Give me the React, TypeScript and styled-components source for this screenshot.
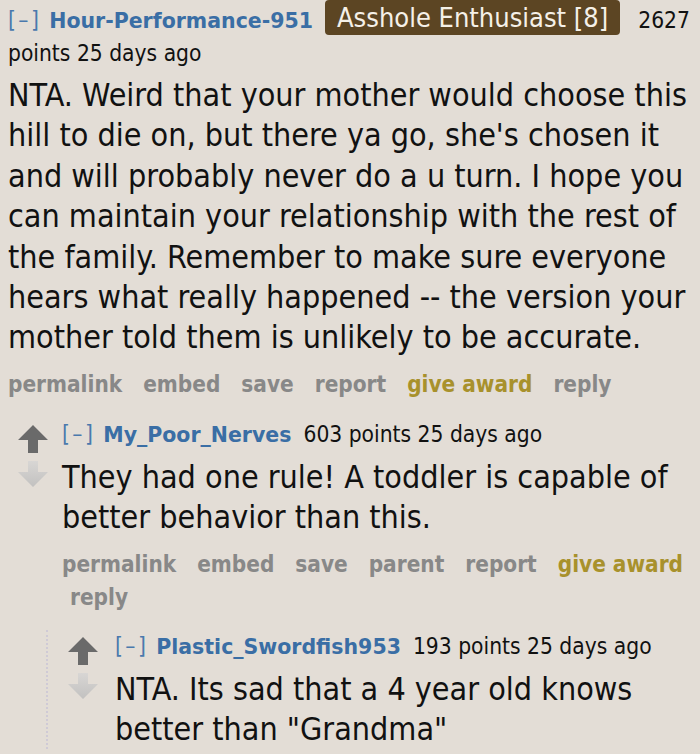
import React from "react";
import styled, { createGlobalStyle } from "styled-components";

const Global = createGlobalStyle`
  html, body { margin: 0; padding: 0; background: #e3ddd6; }
  body { font-family: "DejaVu Sans Condensed", "DejaVu Sans", Verdana, sans-serif; }
`;

const Page = styled.div`
  width: 700px;
  height: 754px;
  overflow: hidden;
  background: #e3ddd6;
  padding: 0 8px;
  box-sizing: border-box;
`;

const Comment = styled.div`
  display: flex;
  align-items: flex-start;
`;

const Votes = styled.div<{ $gap?: number }>`
  width: 30px;
  display: flex;
  flex-direction: column;
  align-items: center;
  gap: 8px;
  margin: 7px ${(p) => p.$gap ?? 14}px 0 10px;
  flex-shrink: 0;
`;

const Entry = styled.div`
  flex: 1;
  min-width: 0;
`;

const Tagline = styled.div`
  font-size: 22.6px;
  line-height: 32px;
  color: #111;
`;

const Toggle = styled.span`
  color: #4a79ad;
  letter-spacing: 2.4px;
  margin-right: 8px;
`;

const Author = styled.span`
  font-family: "DejaVu Sans", Verdana, sans-serif;
  color: #3a6ea5;
  font-weight: bold;
  font-size: 20.5px;
  margin-right: 12px;
`;

const Flair = styled.span`
  display: inline-block;
  background: #5c4523;
  color: #f5f0e8;
  font-size: 27px;
  line-height: 33px;
  padding: 1px 12px;
  border-radius: 4px;
  margin-right: 18px;
  vertical-align: 1px;
`;

const Meta = styled.span``;

const Body = styled.div`
  font-size: 32px;
  line-height: 40.4px;
  color: #111;
  margin-top: 6px;
`;

const Buttons = styled.ul`
  list-style: none;
  margin: 10px 0 0;
  padding: 0;
  display: flex;
  flex-wrap: wrap;
  column-gap: 13px;
  font-size: 22.4px;
  line-height: 33px;
  font-weight: bold;
`;

const Btn = styled.li<{ $gold?: boolean }>`
  color: ${(p) => (p.$gold ? "#a8912c" : "#888888")};
  padding-left: 8px;
  &:first-child { padding-left: 0; }
`;

const Child = styled.div`
  margin-top: 17px;
`;

const GrandChild = styled.div`
  margin-top: 16px;
  margin-left: 38px;
  border-left: 2px dotted #cfcad6;
  padding-left: 10px;
`;

const UpArrow = () => (
  <svg width="30" height="28" viewBox="0 0 30 28">
    <path d="M15 0 L30 15 L20 15 L20 28 L10 28 L10 15 L0 15 Z" fill="#6a6a6a" />
  </svg>
);

const DownArrow = () => (
  <svg width="30" height="26" viewBox="0 0 30 26">
    <defs>
      <linearGradient id="dg" x1="0" y1="0" x2="0" y2="1">
        <stop offset="0" stopColor="#d8d6d4" />
        <stop offset="1" stopColor="#c2c1c0" />
      </linearGradient>
    </defs>
    <path d="M10 0 L20 0 L20 11 L30 11 L15 26 L0 11 L10 11 Z" fill="url(#dg)" />
  </svg>
);

const buttons1 = ["permalink", "embed", "save", "report", "give award", "reply"];
const buttons2 = ["permalink", "embed", "save", "parent", "report", "give award", "reply"];

const ButtonList = ({ items }: { items: string[] }) => (
  <Buttons>
    {items.map((b) => (
      <Btn key={b} $gold={b === "give award"}>
        {b}
      </Btn>
    ))}
  </Buttons>
);

export default function App() {
  return (
    <>
      <Global />
      <Page>
        <Entry>
          <Tagline>
            <Toggle>[–]</Toggle>
            <Author>Hour-Performance-951</Author>
            <Flair>Asshole Enthusiast [8]</Flair>
            <Meta>2627</Meta> <Meta>points 25 days ago</Meta>
          </Tagline>
          <Body>
            NTA. Weird that your mother would choose this hill to die on, but there ya go, she's
            chosen it and will probably never do a u turn. I hope you can maintain your
            relationship with the rest of the family. Remember to make sure everyone hears what
            really happened -- the version your mother told them is unlikely to be accurate.
          </Body>
          <ButtonList items={buttons1} />
        </Entry>
        <Child>
          <Comment>
            <Votes>
              <UpArrow />
              <DownArrow />
            </Votes>
            <Entry>
              <Tagline>
                <Toggle>[–]</Toggle>
                <Author>My_Poor_Nerves</Author>
                <Meta>603 points 25 days ago</Meta>
              </Tagline>
              <Body>They had one rule! A toddler is capable of better behavior than this.</Body>
              <ButtonList items={buttons2} />
            </Entry>
          </Comment>
          <GrandChild>
            <Comment>
              <Votes $gap={17}>
                <UpArrow />
                <DownArrow />
              </Votes>
              <Entry>
                <Tagline>
                  <Toggle>[–]</Toggle>
                  <Author>Plastic_Swordfish953</Author>
                  <Meta>193 points 25 days ago</Meta>
                </Tagline>
                <Body>NTA. Its sad that a 4 year old knows better than "Grandma"</Body>
              </Entry>
            </Comment>
          </GrandChild>
        </Child>
      </Page>
    </>
  );
}
